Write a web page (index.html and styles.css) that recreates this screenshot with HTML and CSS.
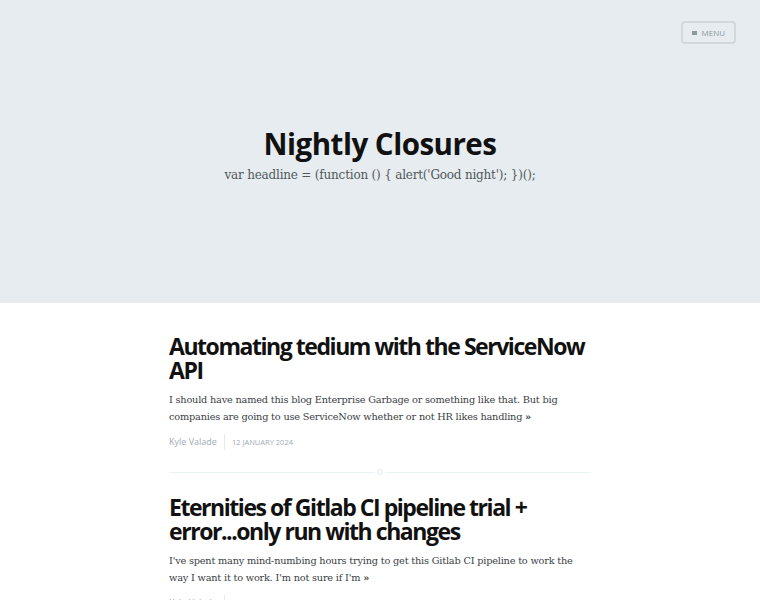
FILE: index.html
```html
<!DOCTYPE html>
<html>
<head>
<meta charset="utf-8">
<link rel="stylesheet" href="styles.css">
</head>
<body>
<header class="site-head">
  <nav class="nav">
    <a class="menu-button" href="#"><span class="menu-icon"></span><span class="menu-word">Menu</span></a>
  </nav>
  <div class="head-content">
    <h1 class="blog-title">Nightly Closures</h1>
    <h2 class="blog-desc">var headline = (function () { alert('Good night'); })();</h2>
  </div>
</header>
<main class="content">
  <article class="post">
    <h2 class="post-title">Automating tedium with the ServiceNow API</h2>
    <p class="excerpt">I should have named this blog Enterprise Garbage or something like that. But big companies are going to use ServiceNow whether or not HR likes handling <span class="more">&raquo;</span></p>
    <div class="meta"><span class="author">Kyle Valade</span><span class="date">12 January 2024</span></div>
  </article>
  <div class="divider"><span class="line"></span><span class="dot"></span><span class="line"></span></div>
  <article class="post">
    <h2 class="post-title">Eternities of Gitlab CI pipeline trial + error...only run with changes</h2>
    <p class="excerpt">I've spent many mind-numbing hours trying to get this Gitlab CI pipeline to work the way I want it to work. I'm not sure if I'm <span class="more">&raquo;</span></p>
    <div class="meta"><span class="author">Kyle Valade</span><span class="date">12 January 2024</span></div>
  </article>
</main>
</body>
</html>
```
FILE: styles.css
```css
html, body { margin: 0; padding: 0; }
body { background: #fff; font-family: "DejaVu Serif", serif; color: #3a4145; }
.site-head {
  background: #e6ecef;
  height: 303px;
  display: flex;
  flex-direction: column;
}
.nav { display: flex; justify-content: flex-end; padding: 21px 24px 0 0; }
.menu-button {
  display: flex; align-items: center; gap: 5px;
  height: 19px; padding: 0 9px 0 9px;
  border: 2px solid #d2d9dd; border-radius: 4px;
  text-decoration: none;
  font-family: "Open Sans", sans-serif; font-size: 8px; text-transform: uppercase;
  color: #8d989f;
}
.menu-icon { width: 5px; height: 4px; background: #8d989f; }
.head-content { text-align: center; padding-top: 80px; }
.blog-title {
  margin: 0; font-family: "Open Sans", sans-serif; font-weight: 700;
  font-size: 29.5px; line-height: 40px; color: #111; letter-spacing: -0.5px;
}
.blog-desc {
  margin: 2px 0 0; font-family: "DejaVu Serif", serif; font-weight: 400;
  font-size: 12px; line-height: 18px; color: #51585c; letter-spacing: -0.2px;
}
.content { width: 422px; margin: 0 auto; padding-top: 31px; }
.post-title {
  margin: 0; font-family: "Open Sans", sans-serif; font-weight: 700;
  font-size: 23px; line-height: 24px; color: #111; letter-spacing: -1.45px;
}
.excerpt { margin: 9px 0 0; font-size: 9.75px; line-height: 17px; color: #3a4145; letter-spacing: -0.2px; }
.more { font-weight: 700; }
.meta { display: flex; align-items: center; margin-top: 9px; font-family: "Open Sans", sans-serif; color: #9eabb3; }
.author { font-size: 9px; padding-right: 7px; border-right: 1px solid #e3e9ec; line-height: 16px; }
.date { font-size: 7.5px; text-transform: uppercase; padding-left: 7px; }
.divider { display: flex; align-items: center; margin: 19px 0 20px; }
.line { flex: 1; height: 1px; background: #ebf2f6; }
.dot { width: 4px; height: 4px; border: 1px solid #e3e9ec; border-radius: 50%; margin: 0 2px; }
```
